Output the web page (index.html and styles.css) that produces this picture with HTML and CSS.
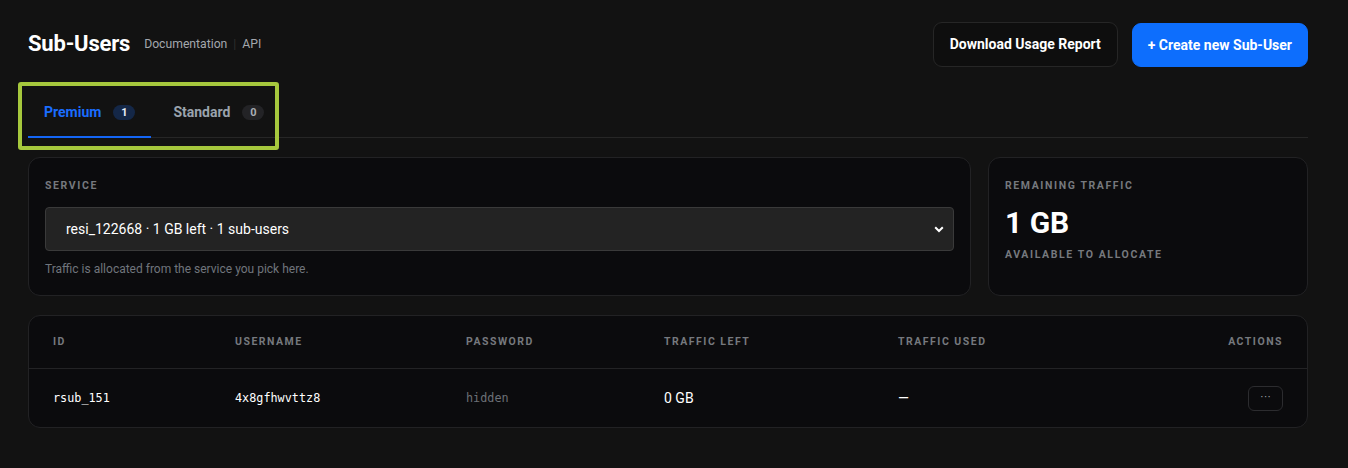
FILE: index.html
```html
<!DOCTYPE html>
<html lang="en">
<head>
<meta charset="utf-8">
<title>Sub-Users</title>
<link rel="stylesheet" href="styles.css">
</head>
<body>
<main class="page">
  <header class="header">
    <div class="title-group">
      <h1 class="title">Sub-Users</h1>
      <nav class="links">
        <a class="link" href="#">Documentation</a>
        <span class="sep">|</span>
        <a class="link" href="#">API</a>
      </nav>
    </div>
    <div class="actions">
      <button class="btn btn-outline">Download Usage Report</button>
      <button class="btn btn-primary">+ Create new Sub-User</button>
    </div>
  </header>

  <div class="tabs-wrap">
    <div class="tabs">
      <div class="tab active">Premium <span class="badge badge-blue">1</span></div>
      <div class="tab">Standard <span class="badge badge-gray">0</span></div>
    </div>
    <div class="highlight"></div>
  </div>

  <section class="cards">
    <div class="card service">
      <div class="label">SERVICE</div>
      <div class="select-wrap">
        <select class="select">
          <option>resi_122668 · 1 GB left · 1 sub-users</option>
        </select>
        <svg class="chevron" width="10" height="7" viewBox="0 0 10 7"><path d="M1.2 1.2 L5 5 L8.8 1.2" fill="none" stroke="#ffffff" stroke-width="2"/></svg>
      </div>
      <div class="help">Traffic is allocated from the service you pick here.</div>
    </div>
    <div class="card remaining">
      <div class="label">REMAINING TRAFFIC</div>
      <div class="big">1 GB</div>
      <div class="label sub">AVAILABLE TO ALLOCATE</div>
    </div>
  </section>

  <section class="card table">
    <div class="row head">
      <div class="th">ID</div>
      <div class="th">USERNAME</div>
      <div class="th">PASSWORD</div>
      <div class="th">TRAFFIC LEFT</div>
      <div class="th">TRAFFIC USED</div>
      <div class="th right">ACTIONS</div>
    </div>
    <div class="row body">
      <div class="td mono">rsub_151</div>
      <div class="td mono">4x8gfhwvttz8</div>
      <div class="td mono muted">hidden</div>
      <div class="td">0 GB</div>
      <div class="td">—</div>
      <div class="td right"><button class="more">···</button></div>
    </div>
  </section>
</main>
</body>
</html>
```

FILE: styles.css
```css
* { box-sizing: border-box; }
html, body { margin: 0; padding: 0; }
body {
  background: #121212;
  color: #ffffff;
  font-family: Roboto, "Liberation Sans", Arial, sans-serif;
  width: 1348px;
  height: 468px;
  overflow: hidden;
}
.page {
  padding: 22px 40px 0 28px;
}
.header {
  display: flex;
  align-items: center;
  justify-content: space-between;
  height: 45px;
}
.title-group {
  display: flex;
  align-items: center;
  gap: 14px;
  margin-top: -2px;
}
.title {
  margin: 0;
  font-size: 22px;
  font-weight: 700;
  letter-spacing: -0.2px;
  color: #ffffff;
}
.links {
  display: flex;
  align-items: center;
  gap: 6px;
  font-size: 12.2px;
  padding-top: 1px;
}
.link {
  color: #a3a7ad;
  text-decoration: none;
}
.sep {
  color: #2e2e2e;
  font-size: 12px;
}
.actions {
  display: flex;
  gap: 14px;
  align-items: center;
}
.btn {
  height: 45px;
  border-radius: 9px;
  font-family: Roboto, "Liberation Sans", Arial, sans-serif;
  font-size: 14px;
  font-weight: 700;
  color: #ffffff;
  cursor: pointer;
  padding-bottom: 2px;
}
.btn-outline {
  background: #0e0e0e;
  border: 1px solid #262626;
  padding-left: 16px;
  padding-right: 16px;
}
.btn-primary {
  background: #0d6efd;
  border: 1px solid #0d6efd;
  padding-left: 15px;
  padding-right: 15px;
  height: 44px;
  margin-top: 1px;
}

.tabs-wrap {
  position: relative;
  margin-top: 20px;
}
.tabs {
  display: flex;
  gap: 6px;
  border-bottom: 1px solid #262626;
}
.tab {
  display: flex;
  align-items: center;
  gap: 12px;
  padding: 15px 16px 14px;
  height: 51px;
  font-size: 14px;
  font-weight: 700;
  color: #9aa3ad;
  border-bottom: 2px solid transparent;
  margin-bottom: -1px;
}
.tab.active {
  color: #1a6dff;
  border-bottom-color: #1466f5;
}
.badge {
  display: inline-flex;
  align-items: center;
  justify-content: center;
  min-width: 22px;
  height: 15px;
  padding: 0 6px;
  border-radius: 8px;
  font-size: 11px;
  font-weight: 700;
}
.badge-blue {
  background: #142747;
  color: #e6ecf5;
}
.badge-gray {
  background: #232326;
  color: #a9adb3;
}
.highlight {
  position: absolute;
  left: -10px;
  top: -5px;
  width: 261px;
  height: 68px;
  border: 4px solid #a6c83d;
  border-radius: 3px;
  pointer-events: none;
}

.card {
  background: #0b0b0d;
  border: 1px solid #222224;
  border-radius: 12px;
}
.cards {
  display: grid;
  grid-template-columns: 943px 320px;
  gap: 17px;
  margin-top: 19px;
}
.service, .remaining {
  height: 139px;
  padding: 22px 16px 0;
}
.label {
  font-size: 10.5px;
  font-weight: 700;
  letter-spacing: 1.6px;
  color: #76797e;
  line-height: 12px;
}
.select-wrap {
  position: relative;
  margin-top: 15px;
}
.select {
  appearance: none;
  -webkit-appearance: none;
  width: 100%;
  height: 44px;
  background: #232323;
  border: 1px solid #3a3a3a;
  border-radius: 4px;
  color: #ffffff;
  font-family: Roboto, "Liberation Sans", Arial, sans-serif;
  font-size: 14px;
  padding: 0 20px 1px;
  outline: none;
}
.chevron {
  position: absolute;
  right: 10px;
  top: 19px;
  pointer-events: none;
}
.help {
  margin-top: 10px;
  font-size: 12px;
  line-height: 16px;
  color: #70757c;
}
.big {
  margin-top: 13px;
  font-size: 30px;
  font-weight: 700;
  line-height: 36px;
  color: #ffffff;
}
.label.sub {
  margin-top: 8px;
}

.table {
  margin-top: 19px;
  width: 1280px;
}
.row {
  display: grid;
  grid-template-columns: 182px 231px 198px 234px 1fr 120px;
  align-items: center;
  padding: 0 24px;
}
.head {
  height: 53px;
  border-bottom: 1px solid #232325;
  padding-bottom: 1px;
}
.body {
  height: 58px;
}
.th {
  font-size: 10.5px;
  font-weight: 700;
  letter-spacing: 1.5px;
  color: #76797e;
}
.td {
  font-size: 14px;
  color: #ffffff;
}
.mono {
  font-family: "DejaVu Sans Mono", "Liberation Mono", monospace;
  font-size: 11.8px;
}
.muted {
  color: #6c7076;
}
.right {
  text-align: right;
  display: flex;
  justify-content: flex-end;
}
.more {
  width: 35px;
  height: 25px;
  background: #0b0b0d;
  border: 1px solid #2c2c2f;
  border-radius: 6px;
  color: #9ca0a6;
  font-size: 11px;
  line-height: 1;
  padding: 0 0 3px;
  cursor: pointer;
}
```
